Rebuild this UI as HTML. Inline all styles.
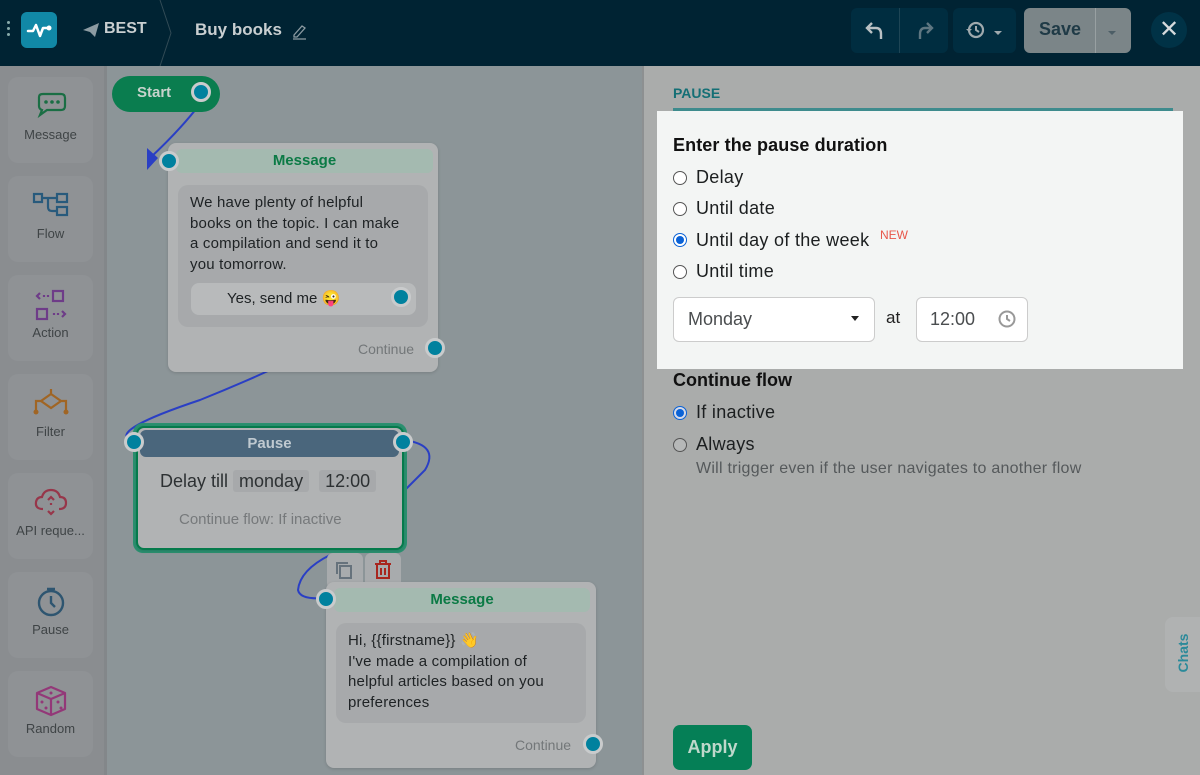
<!DOCTYPE html>
<html><head><meta charset="utf-8"><style>
*{box-sizing:border-box;margin:0;padding:0}
body{width:1200px;height:775px;overflow:hidden;font-family:"Liberation Sans",sans-serif;background:#8c9598;position:relative}
.abs{position:absolute}
.hdr{left:0;top:0;width:1200px;height:66px;background:#002333}
.side{left:0;top:66px;width:107px;height:709px;background:#8a8d90;border-right:3px solid #83878a}
.tile{position:absolute;left:8px;width:85px;height:86px;background:#8f9295;border-radius:10px;text-align:center;font-size:13px;color:#3f4446}
.tile svg{display:block;margin:14px auto 4px}
.node{position:absolute;background:#b1b3b4;border-radius:8px;box-shadow:0 1px 3px rgba(0,0,0,.15)}
.mh{position:absolute;background:#a4bab0;border-radius:6px;color:#0b7a45;font-weight:bold;font-size:15px;text-align:center;line-height:24px}
.bub{position:absolute;background:#a7a9ab;border-radius:10px;color:#1e2224;font-size:15px;line-height:20.5px;padding:8px 12px;white-space:nowrap;letter-spacing:.2px}
.dot{position:absolute;width:20px;height:20px;border-radius:50%;background:#00819e;border:3px solid #c9cbcc}
.cont{position:absolute;color:#737779;font-size:14px}
.panel{left:642px;top:66px;width:558px;height:709px;background:#aaacab;border-left:2px solid #8d9091}
.r{position:absolute;font-size:18px;color:#1c1f20;letter-spacing:.3px;white-space:nowrap}
.rad{position:absolute;width:14px;height:14px;border-radius:50%;border:1px solid #555;background:#fff}
.rad.on{border:1.5px solid #0a62d6;background:#fff}
.rad.on::after{content:"";position:absolute;left:2px;top:2px;width:8px;height:8px;border-radius:50%;background:#0a62d6}
</style></head><body>
<div class="abs hdr"></div>
<div class="abs" style="left:7px;top:21px;width:3px;height:3px;background:#8aa;border-radius:50%;box-shadow:0 6px 0 #8aa,0 12px 0 #8aa"></div>
<div class="abs" style="left:21px;top:12px;width:36px;height:36px;background:#1188a6;border-radius:6px">
<svg width="36" height="36" viewBox="0 0 36 36"><path d="M7 19h5l3-6 4 11 3-8h4" stroke="#fff" stroke-width="2.5" fill="none" stroke-linejoin="round" stroke-linecap="round"/><circle cx="28" cy="16" r="2.5" fill="#fff"/></svg></div>
<svg class="abs" style="left:82px;top:22px" width="18" height="16" viewBox="0 0 18 16"><path d="M1 8 L17 1 L13 15 L8 10 Z" fill="#8c9ba2"/></svg>
<div class="abs" style="left:104px;top:20px;color:#c9cfd1;font-weight:bold;font-size:16px">BEST</div>
<svg class="abs" style="left:158px;top:0" width="16" height="66"><path d="M2 0 L13 33 L2 66" stroke="#314a55" fill="none"/></svg>
<div class="abs" style="left:195px;top:20px;color:#c9cfd1;font-weight:bold;font-size:17px">Buy books</div>
<svg class="abs" style="left:291px;top:22px" width="16" height="18"><path d="M3 13 L11 4 L14 6 L6 15 L3 15 Z M2 17h13" stroke="#8c9ba2" fill="none" stroke-width="1.3"/></svg>
<div class="abs" style="left:851px;top:8px;width:97px;height:45px;background:#002d40;border-radius:6px"></div>
<div class="abs" style="left:899px;top:8px;width:1px;height:45px;background:#1e4555"></div>
<svg class="abs" style="left:864px;top:19px" width="24" height="22"><path d="M8 4 L3 9 L8 14 M3 9 H12 Q17 9 17 15 V20" stroke="#b9c0c3" stroke-width="2.4" fill="none"/></svg>
<svg class="abs" style="left:913px;top:19px" width="24" height="22"><path d="M14 4 L19 9 L14 14 M19 9 H12 Q7 9 7 15 V20" stroke="#5e7681" stroke-width="2.4" fill="none"/></svg>
<div class="abs" style="left:953px;top:8px;width:63px;height:45px;background:#002d40;border-radius:6px"></div>
<svg class="abs" style="left:964px;top:20px" width="24" height="20"><circle cx="12" cy="10" r="7" stroke="#9fa9ad" stroke-width="2.2" fill="none"/><path d="M12 6v4l3 2" stroke="#9fa9ad" stroke-width="2" fill="none"/><path d="M2 9 L5 12 L8 9" fill="#9fa9ad"/></svg>
<div class="abs" style="left:994px;top:31px;border:4px solid transparent;border-top:4px solid #9fa9ad"></div>
<div class="abs" style="left:1024px;top:8px;width:107px;height:45px;background:#7b8588;border-radius:6px"></div>
<div class="abs" style="left:1095px;top:8px;width:1px;height:45px;background:#98a0a2"></div>
<div class="abs" style="left:1039px;top:19px;color:#1f3a46;font-size:18px;font-weight:bold">Save</div>
<div class="abs" style="left:1108px;top:31px;border:4px solid transparent;border-top:4px solid #4c5e66"></div>
<div class="abs" style="left:1151px;top:12px;width:36px;height:36px;border-radius:50%;background:#003246;color:#d5dadc;font-size:24px;text-align:center;line-height:36px">✕</div>

<div class="abs side"></div>
<div class="tile" style="top:77px"><svg width="40" height="32" viewBox="0 0 40 32"><path d="M8 6 Q8 3 12 3 H30 Q34 3 34 7 V15 Q34 19 30 19 H16 L9 24 L11 19 Q8 18 8 15 Z" stroke="#1a6e44" stroke-width="2.2" fill="none"/><circle cx="15" cy="11" r="1.8" fill="#1a6e44"/><circle cx="21" cy="11" r="1.8" fill="#1a6e44"/><circle cx="27" cy="11" r="1.8" fill="#1a6e44"/></svg>Message</div>
<div class="tile" style="top:176px"><svg width="40" height="32" viewBox="0 0 40 32"><rect x="3" y="4" width="8" height="8" stroke="#285a7c" stroke-width="2.2" fill="none"/><rect x="26" y="4" width="10" height="8" stroke="#285a7c" stroke-width="2.2" fill="none"/><rect x="26" y="17" width="10" height="8" stroke="#285a7c" stroke-width="2.2" fill="none"/><path d="M11 8h15 M17 8v9 Q17 21 21 21 H26" stroke="#285a7c" stroke-width="2.2" fill="none"/></svg>Flow</div>
<div class="tile" style="top:275px"><svg width="40" height="32" viewBox="0 0 40 32"><path d="M9 4 L6 7 L9 10 M13 6v2 M17 6v2 M31 22 L34 25 L31 28 M23 24v2 M27 24v2" stroke="#6e3c88" stroke-width="2.2" fill="none"/><rect x="22" y="2" width="10" height="10" stroke="#6e3c88" stroke-width="2.2" fill="none"/><rect x="6" y="20" width="10" height="10" stroke="#6e3c88" stroke-width="2.2" fill="none"/></svg>Action</div>
<div class="tile" style="top:374px"><svg width="40" height="32" viewBox="0 0 40 32"><path d="M20 1v5 M20 6 L30 13 L20 20 L10 13 Z M10 13 H5 V22 M30 13 H35 V22" stroke="#a06524" stroke-width="2.2" fill="none"/><circle cx="5" cy="24" r="2.5" fill="#a06524"/><circle cx="35" cy="24" r="2.5" fill="#a06524"/></svg>Filter</div>
<div class="tile" style="top:473px"><svg width="40" height="32" viewBox="0 0 40 32"><path d="M12 22 Q4 22 5 15 Q6 10 11 10 Q13 3 20 3 Q27 3 29 10 Q35 10 35 16 Q35 22 28 22" stroke="#97364a" stroke-width="2.2" fill="none"/><path d="M17 13 L20 10 L23 13 M20 16v2 M17 24 L20 27 L23 24" stroke="#97364a" stroke-width="2.2" fill="none"/></svg>API reque...</div>
<div class="tile" style="top:572px"><svg width="40" height="32" viewBox="0 0 40 32"><circle cx="20" cy="17" r="12" stroke="#2e5570" stroke-width="2.4" fill="none"/><path d="M16 3h8 M20 10v7 L24 21" stroke="#2e5570" stroke-width="2.4" fill="none"/></svg>Pause</div>
<div class="tile" style="top:671px"><svg width="40" height="32" viewBox="0 0 40 32"><path d="M20 2 L34 8 L34 24 L20 30 L6 24 L6 8 Z M6 8 L20 14 L34 8 M20 14v16" stroke="#933878" stroke-width="2.2" fill="none" stroke-linejoin="round"/><circle cx="20" cy="8" r="1.5" fill="#933878"/><circle cx="11" cy="17" r="1.5" fill="#933878"/><circle cx="15" cy="23" r="1.5" fill="#933878"/><circle cx="27" cy="17" r="1.5" fill="#933878"/><circle cx="30" cy="23" r="1.5" fill="#933878"/></svg>Random</div>

<svg class="abs" style="left:0;top:0" width="642" height="775">
<path d="M200 104 Q180 130 150 158" stroke="#2a3fc4" stroke-width="2" fill="none"/>
<path d="M147 148 L158 158 L147 170 Z" fill="#2a3fc4"/>
<path d="M400 305 Q300 360 200 400 Q110 430 130 440" stroke="#2a3fc4" stroke-width="2" fill="none"/>
<path d="M402 300 L260 370" stroke="#b9bfd6" stroke-width="1.2" fill="none"/>
<path d="M404 440 Q440 445 425 470 L405 490" stroke="#2a3fc4" stroke-width="2" fill="none"/>
<path d="M330 555 Q300 570 298 590 Q300 600 325 598" stroke="#2a3fc4" stroke-width="2" fill="none"/>
</svg>

<div class="abs" style="left:112px;top:76px;width:108px;height:36px;background:#0a7d4f;border-radius:18px;color:#c7d3cc;font-weight:bold;font-size:15px;padding:8px 0 0 25px">Start</div>
<div class="dot" style="left:191px;top:82px"></div>

<div class="node" style="left:168px;top:143px;width:270px;height:229px"></div>
<div class="mh" style="left:176px;top:149px;width:257px">Message</div>
<div class="bub" style="left:178px;top:185px;width:250px;height:142px">We have plenty of helpful<br>books on the topic. I can make<br>a compilation and send it to<br>you tomorrow.</div>
<div class="abs" style="left:191px;top:283px;width:225px;height:32px;background:#b8babb;border-radius:8px;font-size:15px;color:#1e2224;padding:6px 0 0 36px">Yes, send me 😜</div>
<div class="dot" style="left:391px;top:287px"></div>
<div class="cont" style="left:358px;top:341px">Continue</div>
<div class="dot" style="left:425px;top:338px"></div>
<div class="dot" style="left:159px;top:151px"></div>

<div class="abs" style="left:133px;top:423px;width:274px;height:130px;border-radius:10px;background:#2b9070"></div>
<div class="node" style="left:136px;top:426px;width:268px;height:124px;border:2px solid #057a4b;border-radius:8px"></div>
<div class="abs" style="left:140px;top:430px;width:259px;height:27px;background:#4a667c;border-radius:6px;color:#bfc9d0;font-weight:bold;font-size:15px;text-align:center;line-height:27px">Pause</div>
<div class="abs" style="left:160px;top:471px;font-size:18px;color:#2d3133">Delay till <span style="background:#a7a9ab;padding:1px 6px;border-radius:3px">monday</span> &nbsp;<span style="background:#a7a9ab;padding:1px 6px;border-radius:3px">12:00</span></div>
<div class="abs" style="left:179px;top:511px;font-size:15px;color:#76797b">Continue flow: If inactive</div>
<div class="dot" style="left:124px;top:432px"></div>
<div class="dot" style="left:393px;top:432px"></div>

<div class="abs" style="left:327px;top:553px;width:36px;height:36px;background:#a8abad;border-radius:6px"><svg width="36" height="36"><rect x="13" y="13" width="11" height="12" stroke="#66727c" stroke-width="2" fill="none"/><path d="M10 21V10h11" stroke="#66727c" stroke-width="2" fill="none"/></svg></div>
<div class="abs" style="left:365px;top:553px;width:36px;height:36px;background:#a8abad;border-radius:6px"><svg width="36" height="36"><path d="M10 11h16 M15 11V8h6v3 M12 11v14h12V11 M16 15v7 M20 15v7" stroke="#a8261f" stroke-width="2" fill="none"/></svg></div>

<div class="node" style="left:326px;top:582px;width:270px;height:186px"></div>
<div class="mh" style="left:334px;top:588px;width:256px">Message</div>
<div class="bub" style="left:336px;top:623px;width:250px;height:100px">Hi, {{firstname}} 👋<br>I've made a compilation of<br>helpful articles based on you<br>preferences</div>
<div class="cont" style="left:515px;top:737px">Continue</div>
<div class="dot" style="left:583px;top:734px"></div>
<div class="dot" style="left:316px;top:589px"></div>

<div class="abs panel"></div>
<div class="abs" style="left:673px;top:85px;color:#146f75;font-weight:bold;font-size:14px">PAUSE</div>
<div class="abs" style="left:673px;top:108px;width:500px;height:3px;background:#3e8b8d"></div>
<div class="abs" style="left:657px;top:111px;width:526px;height:258px;background:#f3f5f4"></div>
<div class="abs" style="left:673px;top:135px;font-size:18px;color:#111;font-weight:bold;letter-spacing:.1px">Enter the pause duration</div>
<div class="rad" style="left:673px;top:171px"></div><div class="r" style="left:696px;top:167px">Delay</div>
<div class="rad" style="left:673px;top:202px"></div><div class="r" style="left:696px;top:198px">Until date</div>
<div class="rad on" style="left:673px;top:233px"></div><div class="r" style="left:696px;top:230px">Until day of the week</div>
<div class="abs" style="left:880px;top:228px;color:#e8564a;font-size:12px">NEW</div>
<div class="rad" style="left:673px;top:265px"></div><div class="r" style="left:696px;top:261px">Until time</div>
<div class="abs" style="left:673px;top:297px;width:202px;height:45px;background:#fff;border:1px solid #ccc;border-radius:6px;font-size:18px;color:#4a4d4f;padding:11px 0 0 14px">Monday</div>
<div class="abs" style="left:851px;top:316px;border:4px solid transparent;border-top:5px solid #222"></div>
<div class="abs" style="left:886px;top:308px;font-size:17px;color:#222">at</div>
<div class="abs" style="left:916px;top:297px;width:112px;height:45px;background:#fff;border:1px solid #ccc;border-radius:6px;font-size:18px;color:#4a4d4f;padding:11px 0 0 13px">12:00</div>
<svg class="abs" style="left:997px;top:309px" width="20" height="20"><circle cx="10" cy="10" r="7.5" stroke="#999" stroke-width="2" fill="none"/><path d="M10 6v4l3 2" stroke="#999" stroke-width="2" fill="none"/></svg>

<div class="abs" style="left:673px;top:370px;font-size:18px;color:#111;font-weight:bold">Continue flow</div>
<div class="rad on" style="left:673px;top:406px;background:#d6dae8"></div><div class="r" style="left:696px;top:402px">If inactive</div>
<div class="rad" style="left:673px;top:438px;background:#b6b8b8"></div><div class="r" style="left:696px;top:434px">Always</div>
<div class="abs" style="left:696px;top:460px;font-size:16px;color:#55595b;letter-spacing:.25px">Will trigger even if the user navigates to another flow</div>
<div class="abs" style="left:1165px;top:617px;width:40px;height:75px;background:#b0b2b2;border-radius:8px 0 0 8px"></div>
<div class="abs" style="left:1163px;top:645px;transform:rotate(-90deg);color:#2b8a9a;font-weight:bold;font-size:14px;width:40px;text-align:center">Chats</div>
<div class="abs" style="left:673px;top:725px;width:79px;height:45px;background:#057f56;border-radius:7px;color:#bfd8cb;font-weight:bold;font-size:18px;text-align:center;line-height:45px">Apply</div>
</body></html>
